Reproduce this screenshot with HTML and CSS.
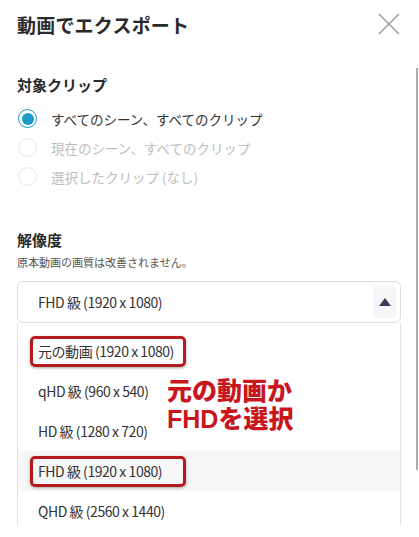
FILE: index.html
```html
<!DOCTYPE html>
<html lang="ja">
<head>
<meta charset="utf-8">
<link rel="stylesheet" href="styles.css">
</head>
<body>
<div class="dialog">
  <header class="head">
    <h1 class="title">動画でエクスポート</h1>
    <button class="close" aria-label="閉じる">
      <svg width="22" height="22" viewBox="0 0 22 22"><path d="M1 1 L21 21 M21 1 L1 21" stroke="#a0a0a0" stroke-width="1.6" fill="none"/></svg>
    </button>
  </header>

  <section class="group">
    <h2 class="label">対象クリップ</h2>
    <ul class="radios">
      <li class="radio checked"><span class="dot"></span>すべてのシーン、すべてのクリップ</li>
      <li class="radio disabled"><span class="dot"></span>現在のシーン、すべてのクリップ</li>
      <li class="radio disabled"><span class="dot"></span>選択したクリップ (なし)</li>
    </ul>
  </section>

  <section class="group res">
    <h2 class="label">解像度</h2>
    <p class="note">原本動画の画質は改善されません。</p>
    <div class="select">
      <span class="value">FHD 級 (1920 x 1080)</span>
      <span class="arrow"><svg width="12" height="8" viewBox="0 0 12 8"><path d="M6 0 L12 8 L0 8 Z" fill="#383d5a"/></svg></span>
    </div>
    <ul class="options">
      <li class="opt"><span class="mark">元の動画 (1920 x 1080)</span></li>
      <li class="opt">qHD 級 (960 x 540)</li>
      <li class="opt">HD 級 (1280 x 720)</li>
      <li class="opt hover"><span class="mark">FHD 級 (1920 x 1080)</span></li>
      <li class="opt">QHD 級 (2560 x 1440)</li>
    </ul>
    <div class="callout">元の動画か<br>FHDを選択</div>
  </section>
</div>
<div class="scrollbar"></div>
</body>
</html>
```

FILE: styles.css
```css
* { box-sizing: border-box; }
html, body { margin: 0; padding: 0; background: #fff; }
body {
  width: 419px;
  height: 537px;
  overflow: hidden;
  position: relative;
  font-family: "Noto Sans CJK JP", "Noto Sans", sans-serif;
  color: #333;
}
.dialog { padding: 10px 18px 0 17px; }
.head { display: flex; justify-content: space-between; align-items: center; height: 28px; }
.title { margin: 0; font-size: 19px; font-weight: 700; color: #2a2a2a; letter-spacing: 0.2px; }
.close { border: 0; background: none; padding: 0; margin-right: 1px; display: flex; }

.group { margin-top: 36px; }
.label { margin: 0; font-size: 15px; font-weight: 700; color: #2a2a2a; line-height: 22px; }
.radios { list-style: none; margin: 8px 0 0; padding: 0; }
.radio { display: flex; align-items: center; height: 29px; font-size: 13.5px; color: #333; }
.radio .dot {
  width: 19px; height: 19px; border-radius: 50%;
  border: 1.5px solid #e6e6e6; margin: 0 14px 0 1px; flex: none;
  display: flex; align-items: center; justify-content: center;
}
.radio.checked .dot { border-color: #1c9ac8; }
.radio.checked .dot::after { content: ""; width: 12px; height: 12px; border-radius: 50%; background: #1c9ac8; }
.radio.disabled { color: #bdbdbd; }

.res { margin-top: 38px; position: relative; }
.note { margin: 3px 0 0; font-size: 11px; color: #555; line-height: 16px; }
.select {
  margin-top: 11px; height: 42px; border: 1px solid #dcdcdc; border-radius: 6px;
  display: flex; align-items: center; justify-content: space-between;
  padding: 0 4px 0 20px; font-size: 14px; letter-spacing: -0.45px; color: #333;
}
.arrow { width: 23px; height: 32px; background: #f6f6f8; border-radius: 3px; display: flex; align-items: center; justify-content: center; }
.options {
  list-style: none; margin: 0; padding: 8px 0 0; border: 1px solid #e2e2e2; border-top: 0; border-bottom: 0;
  height: 202px; overflow: hidden;
}
.opt { height: 40px; display: flex; align-items: center; padding-left: 20px; font-size: 14px; letter-spacing: -0.45px; color: #333; white-space: nowrap; }
.opt.hover { background: #f7f7f7; }
.mark {
  display: inline-block; white-space: nowrap;
  margin-left: -8px; padding: 2px 8px 3px 5px; border: 3px solid #b31b1e; border-radius: 5px;
  box-shadow: 0 1px 3px rgba(0,0,0,0.35); width: 156px;
}
.callout {
  position: absolute; left: 150px; top: 148px;
  font-family: "Liberation Sans", "Noto Sans CJK JP", sans-serif;
  font-size: 25px; font-weight: 900; line-height: 28px; color: #c9161c;
}
.scrollbar { position: absolute; left: 416px; top: 68px; width: 2px; height: 402px; background: #a9adb3; }
```
